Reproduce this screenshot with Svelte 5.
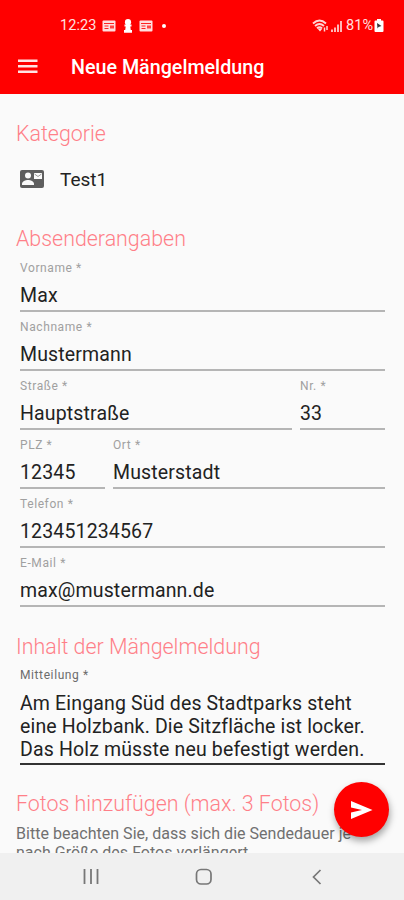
<script lang="ts">
	type Field = { id: string; label: string; value: string; width?: number };

	let rows = $state<Field[][]>([
		[{ id: 'vorname', label: 'Vorname *', value: 'Max' }],
		[{ id: 'nachname', label: 'Nachname *', value: 'Mustermann' }],
		[
			{ id: 'strasse', label: 'Straße *', value: 'Hauptstraße' },
			{ id: 'nr', label: 'Nr. *', value: '33', width: 85 }
		],
		[
			{ id: 'plz', label: 'PLZ *', value: '12345', width: 85 },
			{ id: 'ort', label: 'Ort *', value: 'Musterstadt' }
		],
		[{ id: 'telefon', label: 'Telefon *', value: '123451234567' }],
		[{ id: 'email', label: 'E-Mail *', value: 'max@mustermann.de' }]
	]);

	let message = $state(
		'Am Eingang Süd des Stadtparks steht\neine Holzbank. Die Sitzfläche ist locker.\nDas Holz müsste neu befestigt werden.'
	);
</script>

{#snippet cardIcon()}
	<svg width="14" height="12" viewBox="0 0 14 12">
		<rect x="0.5" y="0.5" width="13" height="11" rx="1" fill="#ffdede" />
		<path d="M2 3.500h10M2.500 6h4M2.500 8.500h4" stroke="#f22" stroke-width="1" />
		<rect x="8" y="5.500" width="4" height="3" fill="#f44" />
	</svg>
{/snippet}

<div class="screen">
	<header>
		<div class="status">
			<span class="time">12:23</span>
			<span class="card-one">{@render cardIcon()}</span>
			<svg class="pawn" width="8" height="14" viewBox="0 0 8 14" fill="#fff">
				<circle cx="4" cy="3.2" r="3.1" />
				<path d="M0.500 5.500h7v2H6.300L6.800 11H8v2.800H0V11h1.200L1.700 7.500H0.500z" />
			</svg>
			<span class="card-two">{@render cardIcon()}</span>
			<span class="dot"></span>
			<span class="spacer"></span>
			<svg width="31" height="16" viewBox="0 0 31 16" fill="none" stroke="#ffd6d6">
				<path d="M1 5.500Q7.500-.5 14 5.500M3 8Q7.500 4 12 8M5 10.300Q7.500 8 10 10.300" stroke-width="1.900" />
				<path d="M8 13.500 5.500 10.500h5z" fill="#ffdede" stroke="none" />
				<path d="M12.500 9.500v4M15 8v4" stroke-width="1.500" />
				<path d="M20 11.500V14M23 9.500V14M26 6.500V14M29 3v11" stroke-width="1.700" />
			</svg>
			<span class="percent">81%</span>
			<svg width="10" height="13" viewBox="0 0 10 13">
				<path d="M3 0h4v1.500h1.500q1 0 1 1V12q0 1-1 1h-7q-1 0-1-1V2.500q0-1 1-1H3z" fill="#fff" />
				<path d="M3 4 7.500 7 4.500 8 3.500 9.500z" fill="#333" />
			</svg>
		</div>
		<div class="toolbar">
			<svg width="20" height="16" viewBox="0 0 20 16" fill="none" stroke="#ffe3e3" stroke-width="2.500">
				<path d="M0 1.750h19.500M0 7.250h19.500M0 12.750h19.500" />
			</svg>
			<h1>Neue Mängelmeldung</h1>
		</div>
	</header>

	<main>
		<h2 class="h-category">Kategorie</h2>
		<div class="category">
			<svg width="24" height="18" viewBox="0 0 24 18">
				<rect width="24" height="18" rx="2" fill="#5e5e5e" />
				<circle cx="8" cy="5.500" r="3" fill="#fafafa" />
				<path d="M2 15v-1.200C2 11.300 5.500 10 8 10s6 1.300 6 3.800V15z" fill="#fafafa" />
				<path d="M14 3h8v6h-8z" fill="#fafafa" />
				<path d="m14.500 4 3.500 2.500L21.500 4" fill="none" stroke="#999" />
			</svg>
			<span>Test1</span>
		</div>

		<h2 class="h-sender">Absenderangaben</h2>
		<div class="form">
			{#each rows as row}
				<div class="row">
					{#each row as field (field.id)}
						<div class="field" style:flex={field.width ? `0 0 ${field.width}px` : null}>
							<label for={field.id}>{field.label}</label>
							<input id={field.id} bind:value={field.value} />
						</div>
					{/each}
				</div>
			{/each}
		</div>

		<h2 class="h-message">Inhalt der Mängelmeldung</h2>
		<div class="form message">
			<label for="mitteilung">Mitteilung *</label>
			<textarea id="mitteilung" rows="3" spellcheck="false" bind:value={message}></textarea>
		</div>

		<h2 class="h-photos">Fotos hinzufügen (max. 3 Fotos)</h2>
		<p>Bitte beachten Sie, dass sich die Sendedauer je<br />nach Größe des Fotos verlängert.</p>
	</main>

	<button class="fab" aria-label="Senden">
		<svg width="22" height="18" viewBox="0 0 22 18">
			<path d="M0 0 21.500 9 0 18V11.500L11 9 0 6.500z" fill="#fff" />
		</svg>
	</button>

	<nav>
		<svg width="16" height="16" viewBox="0 0 16 16" fill="none" stroke="#777" stroke-width="1.800">
			<path d="M1.500 0v15M8 0v15M14.500 0v15" />
		</svg>
		<svg class="home" width="18" height="18" viewBox="0 0 18 18" fill="none" stroke="#777" stroke-width="1.700">
			<rect x="1.500" y="1.500" width="14.500" height="14.500" rx="4.500" />
		</svg>
		<svg width="10" height="16" viewBox="0 0 10 16" fill="none" stroke="#777" stroke-width="1.700">
			<path d="M8.500 1 1.500 8l7 7" />
		</svg>
	</nav>
</div>

<style>
	:global(body) {
		margin: 0;
	}

	.screen {
		position: relative;
		display: flex;
		flex-direction: column;
		width: 404px;
		height: 900px;
		overflow: hidden;
		background: #fafafa;
		color: #222;
		font-family: Roboto, sans-serif;
	}

	header {
		flex: 0 0 94px;
		box-sizing: border-box;
		background: #f00;
		color: #fff;
	}

	.status {
		display: flex;
		align-items: center;
		height: 40px;
		padding: 11px 20px 0 60px;
		box-sizing: border-box;
		font-size: 14.500px;
		color: #ffe0e0;
	}

	.status svg {
		display: block;
	}

	.time {
		letter-spacing: 0.1px;
	}

	.card-one {
		margin-left: 5px;
	}

	.pawn {
		margin: 0 7px 0 8px;
	}

	.dot {
		width: 4px;
		height: 4px;
		margin-left: 9px;
		border-radius: 50%;
		background: #fff;
	}

	.spacer {
		flex: 1;
	}

	.percent {
		margin: 0 1px 0 3px;
	}

	.toolbar {
		display: flex;
		align-items: center;
		height: 54px;
		padding-left: 18px;
	}

	h1 {
		margin: 0 0 0 33px;
		font-size: 19.700px;
		font-weight: 500;
	}

	main {
		flex: 1;
		min-height: 0;
		padding: 0 19px 0 16px;
		overflow: hidden;
	}

	h2 {
		margin: 0;
		font-size: 21.400px;
		line-height: 28px;
		font-weight: 300;
		color: #ff7f88;
		white-space: nowrap;
	}

	.h-category {
		margin-top: 26px;
	}

	.category {
		display: flex;
		align-items: center;
		gap: 16px;
		height: 24px;
		margin: 19px 0 34px 4px;
		font-size: 19px;
	}

	.form {
		padding-left: 4px;
	}

	.row {
		display: flex;
		gap: 8px;
		height: 59px;
	}

	.field {
		flex: 1;
		min-width: 0;
	}

	label {
		display: block;
		padding-top: 7px;
		font-size: 12px;
		line-height: 16px;
		letter-spacing: 0.6px;
		color: #a0a0a0;
	}

	input,
	textarea {
		display: block;
		box-sizing: border-box;
		width: 100%;
		margin: 0;
		padding: 0;
		border: 0;
		border-bottom: 2px solid #b5b5b5;
		border-radius: 0;
		outline: none;
		background: none;
		color: #222;
		font: 19.500px Roboto, sans-serif;
		letter-spacing: 0.15px;
	}

	input {
		height: 36px;
		padding-top: 5px;
	}

	.h-message {
		margin-top: 26px;
	}

	.message label {
		padding-top: 6px;
		color: #6c6c6c;
	}

	textarea {
		height: 82px;
		padding-top: 9px;
		overflow: hidden;
		line-height: 23px;
		border-bottom: 2px solid #333;
		resize: none;
		white-space: pre;
	}

	.h-photos {
		margin-top: 25px;
	}

	p {
		margin: 6px 0 0;
		font-size: 16px;
		line-height: 19px;
		letter-spacing: 0.03px;
		color: #707070;
		white-space: nowrap;
	}

	.fab {
		position: absolute;
		top: 782px;
		left: 334px;
		display: flex;
		align-items: center;
		justify-content: center;
		width: 55px;
		height: 55px;
		padding: 0;
		border: 0;
		border-radius: 50%;
		background: #f00;
		box-shadow: 1px 4px 7px rgba(0, 0, 0, 0.35);
	}

	nav {
		display: flex;
		align-items: center;
		justify-content: space-between;
		flex: 0 0 47px;
		box-sizing: border-box;
		padding: 0 82px 0 83px;
		background: #f0f0f0;
	}

	.home {
		margin-right: 3px;
	}
</style>
